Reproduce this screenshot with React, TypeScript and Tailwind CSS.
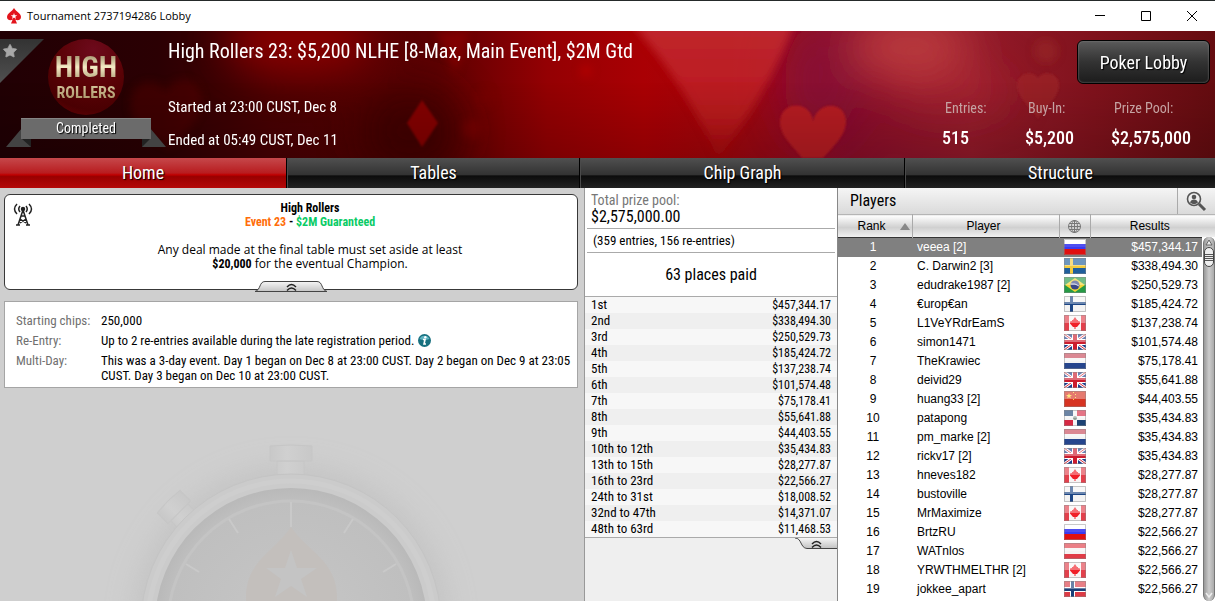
import { ReactNode } from 'react';
import { Star } from 'lucide-react';

const tabs = ['Home', 'Tables', 'Chip Graph', 'Structure'];

const stats = [
  { label: 'Entries:', value: '515' },
  { label: 'Buy-In:', value: '$5,200' },
  { label: 'Prize Pool:', value: '$2,575,000' },
];

const payouts = [
  ['1st', '$457,344.17'],
  ['2nd', '$338,494.30'],
  ['3rd', '$250,529.73'],
  ['4th', '$185,424.72'],
  ['5th', '$137,238.74'],
  ['6th', '$101,574.48'],
  ['7th', '$75,178.41'],
  ['8th', '$55,641.88'],
  ['9th', '$44,403.55'],
  ['10th to 12th', '$35,434.83'],
  ['13th to 15th', '$28,277.87'],
  ['16th to 23rd', '$22,566.27'],
  ['24th to 31st', '$18,008.52'],
  ['32nd to 47th', '$14,371.07'],
  ['48th to 63rd', '$11,468.53'],
];

const players = [
  { name: 'veeea [2]', country: 'ru', result: '$457,344.17' },
  { name: 'C. Darwin2 [3]', country: 'se', result: '$338,494.30' },
  { name: 'edudrake1987 [2]', country: 'br', result: '$250,529.73' },
  { name: '€urop€an', country: 'fi', result: '$185,424.72' },
  { name: 'L1VeYRdrEamS', country: 'ca', result: '$137,238.74' },
  { name: 'simon1471', country: 'gb', result: '$101,574.48' },
  { name: 'TheKrawiec', country: 'nl', result: '$75,178.41' },
  { name: 'deivid29', country: 'gb', result: '$55,641.88' },
  { name: 'huang33 [2]', country: 'cn', result: '$44,403.55' },
  { name: 'patapong', country: 'do', result: '$35,434.83' },
  { name: 'pm_marke [2]', country: 'nl', result: '$35,434.83' },
  { name: 'rickv17 [2]', country: 'gb', result: '$35,434.83' },
  { name: 'hneves182', country: 'ca', result: '$28,277.87' },
  { name: 'bustoville', country: 'fi', result: '$28,277.87' },
  { name: 'MrMaximize', country: 'ca', result: '$28,277.87' },
  { name: 'BrtzRU', country: 'ru', result: '$22,566.27' },
  { name: 'WATnlos', country: 'at', result: '$22,566.27' },
  { name: 'YRWTHMELTHR [2]', country: 'ca', result: '$22,566.27' },
  { name: 'jokkee_apart', country: 'no', result: '$22,566.27' },
];

const flagArt: Record<string, ReactNode> = {
  ru: (
    <>
      <path fill="#fff" d="M0 0h22v6H0z" />
      <path fill="#3a3af0" d="M0 5h22v6H0z" />
      <path fill="#e01010" d="M0 10h22v6H0z" />
    </>
  ),
  se: (
    <>
      <path fill="#1f5f9c" d="M0 0h22v16H0z" />
      <path fill="#f3cb3c" d="M6 0h3v16H6zM0 7h22v3H0z" />
    </>
  ),
  br: (
    <>
      <path fill="#259a45" d="M0 0h22v16H0z" />
      <path fill="#f2d435" d="M11 1l10 7-10 7L1 8z" />
      <circle cx="11" cy="8" r="4.500" fill="#3a4787" />
      <path stroke="#dde" fill="none" d="M7 7q4-1 8 2" />
    </>
  ),
  fi: (
    <>
      <path fill="#f3f3f3" d="M0 0h22v16H0z" />
      <path fill="#1c4585" d="M6 0h3v16H6zM0 6h22v3H0z" />
    </>
  ),
  ca: (
    <>
      <path fill="#f8f4f4" d="M0 0h22v16H0z" />
      <path fill="#e2404c" d="M0 0h5v16H0zM17 0h5v16h-5z" />
      <path fill="#f02028" d="M11 2l2 3h1v1l2 .5v2L13 12h-1.500v2h-1v-2H9L6 8.500v-2L8 6V5h1z" />
    </>
  ),
  gb: (
    <>
      <path fill="#1c3c8c" d="M0 0h22v16H0z" />
      <path stroke="#fff" strokeWidth="3" d="M0 0l22 16M22 0L0 16" />
      <path stroke="#d22a3a" d="M0 0l22 16M22 0L0 16" />
      <path fill="#fff" d="M8 0h6v16H8zM0 5h22v6H0z" />
      <path fill="#cc1c2e" d="M9 0h4v16H9zM0 6h22v4H0z" />
    </>
  ),
  nl: (
    <>
      <path fill="#c8495a" d="M0 0h22v6H0z" />
      <path fill="#f3f3f3" d="M0 5h22v6H0z" />
      <path fill="#26458d" d="M0 10h22v6H0z" />
    </>
  ),
  cn: (
    <>
      <path fill="#d73422" d="M0 0h22v16H0z" />
      <path fill="#ffd83a" d="M5 2l.8 2.100H8L6.200 5.400l.7 2.200L5 6.300 3.100 7.600l.7-2.200L2 4.100h2.200zM9 1h1v1H9zM11 3h1v1h-1zM11 6h1v1h-1zM9 8h1v1H9z" />
    </>
  ),
  do: (
    <>
      <path fill="#f5f5f5" d="M0 0h22v16H0z" />
      <path fill="#1d4374" d="M0 0h9v6H0zM13 10h9v6h-9z" />
      <path fill="#d62a44" d="M13 0h9v6h-9zM0 10h9v6H0z" />
      <circle cx="11" cy="8" r="2" fill="#8a9a92" />
    </>
  ),
  at: (
    <>
      <path fill="#e03b46" d="M0 0h22v16H0z" />
      <path fill="#f5f2f2" d="M0 5h22v6H0z" />
    </>
  ),
  no: (
    <>
      <path fill="#dc3b46" d="M0 0h22v16H0z" />
      <path fill="#fff" d="M6 0h5v16H6zM0 6h22v5H0z" />
      <path fill="#1c4078" d="M7 0h3v16H7zM0 7h22v3H0z" />
    </>
  ),
};

function Flag({ country }: { country: string }) {
  return (
    <svg width="22" height="16" viewBox="0 0 22 16" role="img" aria-label={country} className="mx-auto block">
      {flagArt[country]}
      <path fill="#fff" fillOpacity={country === 'ru' ? 0.1 : 0.35} d="M0 0h22v8H0z" />
      <path fill="none" stroke="#888" strokeOpacity=".45" d="M.5.5h21v15H.5z" />
    </svg>
  );
}

function HeaderArt() {
  return (
    <svg viewBox="0 0 1215 127" preserveAspectRatio="none" className="absolute inset-0 h-full w-full" aria-hidden="true">
      <defs>
        <linearGradient id="base">
          <stop offset="0" stopColor="#210004" />
          <stop offset=".13" stopColor="#2b0003" />
          <stop offset=".22" stopColor="#480003" />
          <stop offset=".36" stopColor="#5c0002" />
          <stop offset=".45" stopColor="#940003" />
          <stop offset=".53" stopColor="#aa0004" />
          <stop offset=".6" stopColor="#a2060c" />
          <stop offset=".66" stopColor="#960c22" />
          <stop offset=".7" stopColor="#8d0e2b" />
          <stop offset=".8" stopColor="#951b2b" />
          <stop offset=".9" stopColor="#80121c" />
          <stop offset="1" stopColor="#650c10" />
        </linearGradient>
        <linearGradient id="lobe" x2="0" y2="1">
          <stop offset="0" stopColor="#c42c34" />
          <stop offset=".7" stopColor="#be1c20" />
          <stop offset="1" stopColor="#b01012" stopOpacity=".5" />
        </linearGradient>
        <linearGradient id="shade" x2="0" y2="1">
          <stop offset=".4" stopColor="#000" stopOpacity="0" />
          <stop offset="1" stopColor="#000" stopOpacity=".16" />
        </linearGradient>
        <filter id="soft" x="-50%" y="-50%" width="200%" height="200%">
          <feGaussianBlur stdDeviation="20" />
        </filter>
        <filter id="edge" x="-50%" y="-50%" width="200%" height="200%">
          <feGaussianBlur stdDeviation="4" />
        </filter>
        <filter id="crisp" x="-20%" y="-20%" width="140%" height="140%">
          <feGaussianBlur stdDeviation="1" />
        </filter>
      </defs>
      <path fill="url(#base)" d="M0 0h1215v127H0z" />
      <g filter="url(#soft)">
        <ellipse cx="300" cy="10" rx="75" ry="35" fill="#8e0004" opacity=".9" />
        <ellipse cx="410" cy="100" rx="50" ry="45" fill="#3c0000" opacity=".8" />
        <ellipse cx="910" cy="15" rx="60" ry="34" fill="#c24242" opacity=".8" />
        <ellipse cx="950" cy="60" rx="60" ry="24" fill="#ab2630" opacity=".6" />
        <ellipse cx="820" cy="50" rx="36" ry="60" fill="#86093a" opacity=".8" />
      </g>
      <g filter="url(#edge)">
        <path fill="url(#lobe)" opacity=".85" d="M632-8h162q-18 56-76 136Q690 60 632-8z" />
        <path fill="#6c0003" opacity=".3" d="M130 75q0-24 20-24 12 0 16 10 4-12 18-12 18 0 18 22 0 18-32 46-40-22-40-42z" />
        <path fill="#9c0006" opacity=".5" d="M435 0h34l-13 42z" />
        <circle cx="485" cy="67" r="8" fill="#7c0004" opacity=".4" />
        <circle cx="472" cy="98" r="10" fill="#8a0004" opacity=".4" />
        <circle cx="586" cy="40" r="6" fill="#b80008" opacity=".7" />
        <circle cx="1046" cy="20" r="12" fill="#a23124" opacity=".35" />
      </g>
      <g filter="url(#crisp)">
        <path fill="#840003" d="M422 69l16 23-16 24-15-24z" />
        <path fill="#b71d22" d="M813 91c-1-22-33-22-33 0 0 14 13 24 22 36h21c13-14 23-24 23-36 0-21-29-22-33 0z" />
        <path fill="#a32a2a" opacity=".55" d="M1038 48c-2-9-21-8-21 6 0 13 14 22 21 34 7-12 21-21 21-34 0-14-19-15-21-6z" />
      </g>
      <path fill="url(#shade)" d="M0 0h1215v127H0z" />
    </svg>
  );
}

function EventLogo() {
  return (
    <div className="relative flex h-19 w-19 flex-col items-center justify-center overflow-hidden rounded-full bg-[radial-gradient(circle_at_60%_15%,#6d0a1c,#5a0206_45%,#4a0002_75%,#6e0307)]">
      <span className="bg-linear-to-b from-[#8d7b55] via-[#f5ebc6] to-[#a4916a] bg-clip-text font-['Roboto_Condensed',sans-serif] text-[30px] leading-8 font-bold text-transparent">
        HIGH
      </span>
      <span className="bg-linear-to-b from-[#d9caa0] to-[#a08c60] bg-clip-text font-['Roboto_Condensed',sans-serif] text-[16px] leading-5 font-bold text-transparent">
        ROLLERS
      </span>
    </div>
  );
}

function Stopwatch() {
  return (
    <svg viewBox="0 388 584 213" preserveAspectRatio="xMidYMin slice" className="h-full w-full" aria-hidden="true">
      <defs>
        <filter id="glow" x="-30%" y="-30%" width="160%" height="160%">
          <feGaussianBlur stdDeviation="14" />
        </filter>
        <radialGradient id="face">
          <stop offset=".3" stopColor="#c4c4c4" />
          <stop offset=".9" stopColor="#bfbfbf" />
          <stop offset="1" stopColor="#b9b9b9" />
        </radialGradient>
        <linearGradient id="knob">
          <stop offset="0" stopColor="#c8c8c8" />
          <stop offset=".4" stopColor="#d0d0d0" />
          <stop offset="1" stopColor="#c8c8c8" />
        </linearGradient>
      </defs>
      <circle cx="291" cy="624" r="158" fill="#bfbfbf" opacity=".7" filter="url(#glow)" />
      <path fill="url(#knob)" stroke="#c6c6c6" d="M277 461h27v14h-27zM270 446q21-2 42 0v15h-42z" />
      <g transform="rotate(-45 291 624)">
        <path fill="url(#knob)" stroke="#c6c6c6" d="M279 466h24v10h-24zM275 451q16-2 32 0v15h-32z" />
      </g>
      <circle cx="291" cy="624" r="150" fill="#cbcbcb" stroke="#c4c4c4" />
      <circle cx="291" cy="624" r="143" fill="none" stroke="#cecece" strokeWidth="5" />
      <circle cx="291" cy="624" r="136" fill="url(#face)" />
      <circle cx="291" cy="624" r="123" fill="none" stroke="#c4c4c4" strokeWidth="3" />
      <path stroke="#c9c9c9" strokeWidth="2" d="M291 502v25M229 519l9 14M353 519l-9 14M186 564l13 8M396 564l-13 8" />
      <path fill="#c3bfbc" d="M291 527c16 24 46 34 46 70v10h-91v-10c0-36 29-46 45-70z" />
      <path fill="#c4c4c4" d="M291 550l6 18h20l-16 11 6 18-16-11-16 11 6-18-15-11h19z" />
    </svg>
  );
}

function DoubleChevron() {
  return (
    <svg width="11" height="8" viewBox="0 0 11 8" fill="none" stroke="#222" strokeWidth="1.400">
      <path d="M1 4q4.500-5 9 0M1 7.500q4.500-5 9 0" />
    </svg>
  );
}

export default function App() {
  return (
    <div className="flex h-screen flex-col overflow-hidden bg-white font-['Roboto_Condensed',sans-serif] text-black">
      <div className="h-px shrink-0 bg-[#252a2a]" />
      <div className="flex h-[30px] shrink-0 items-center bg-white pl-[7px]">
        <svg width="14" height="16" viewBox="0 0 14 16">
          <path fill="#e3141c" d="M7 0c2 3.500 7 5.500 7 9 0 3.300-3.700 4-5.700 2.600L10 15.500H4l1.700-3.900C3.700 13 0 12.300 0 9c0-3.500 5-5.500 7-9z" />
          <path fill="#fff" d="M7 5l.8 2.300h2.400L8.300 8.700l.7 2.200-2-1.300-2 1.300.7-2.200-1.900-1.400h2.400z" />
        </svg>
        <h1 className="ml-1.5 flex-1 font-['Open_Sans',sans-serif] text-[11px]">Tournament 2737194286 Lobby</h1>
        <button aria-label="Minimize" className="flex h-full w-[46px] items-center justify-center">
          <svg width="10" height="10" viewBox="0 0 10 10" stroke="#000"><path d="M0 4.500h10" /></svg>
        </button>
        <button aria-label="Maximize" className="flex h-full w-[46px] items-center justify-center">
          <svg width="10" height="10" viewBox="0 0 10 10" stroke="#000" fill="none"><path d="M.5.5h9v9h-9z" /></svg>
        </button>
        <button aria-label="Close" className="flex h-full w-[46px] items-center justify-center">
          <svg width="10" height="10" viewBox="0 0 10 10" stroke="#000"><path d="M0 0l10 10M10 0L0 10" /></svg>
        </button>
      </div>

      <header className="relative flex h-[127px] shrink-0 text-white">
        <HeaderArt />
        <div className="relative flex w-[168px] shrink-0 flex-col items-center pt-2 pl-1">
          <button aria-label="Add to favourites" className="absolute top-2 left-0 h-11 w-11 bg-linear-to-b from-[#333] to-[#505050] [clip-path:polygon(0_0,100%_0,0_100%)]">
            <Star className="absolute top-1 left-0.5 h-4 w-4 fill-[#a8a8a8] text-[#a8a8a8]" strokeWidth={1} />
          </button>
          <EventLogo />
          <div className="relative mt-[3px] flex h-[30px] w-40 justify-center">
            <svg viewBox="0 0 160 30" className="absolute inset-0 h-full w-full" aria-hidden="true">
              <path fill="#434343" d="M16 10L0 29h25V18zM144 10l16 19h-24V18z" />
              <path fill="#222" d="M16 21h9v8zM144 21h-8v8z" />
              <path fill="#6b6b6b" d="M15 0h130v21H15z" />
              <path stroke="#858585" d="M15 .5h130" />
            </svg>
            <span className="relative text-[14px] leading-5 [text-shadow:1px_1px_1px_#000]">Completed</span>
          </div>
        </div>
        <div className="relative flex min-w-0 flex-1 flex-col">
          <h2 className="mt-2 text-[20px] leading-6">High Rollers 23: $5,200 NLHE [8-Max, Main Event], $2M Gtd</h2>
          <p className="mt-[34px] text-[15px] leading-5">Started at 23:00 CUST, Dec 8</p>
          <p className="mt-[13px] text-[15px] leading-5">Ended at 05:49 CUST, Dec 11</p>
        </div>
        <div className="relative flex flex-col items-end pt-[9px]">
          <button className="mr-[5px] h-[44px] w-[133px] rounded-md border border-black bg-linear-to-b from-[#5a5a5a] via-[#333] via-50% to-[#1c1c1c] text-[18px] shadow-[inset_0_0_2px_#888] [text-shadow:1px_1px_1px_#000]">
            Poker Lobby
          </button>
          <dl className="mt-3.5 grid grid-cols-[83px_86px_104px]">
            {stats.map((s) => (
              <div key={s.label}>
                <dt className="pl-[3px] text-[14px] leading-5 text-[#c5a3a3]">{s.label}</dt>
                <dd className="mt-2 text-[18px] leading-6 font-medium">{s.value}</dd>
              </div>
            ))}
          </dl>
        </div>
      </header>

      <nav className="grid h-[30px] shrink-0 grid-cols-[287fr_293fr_325fr_310fr]">
        {tabs.map((tab, i) => (
          <button
            key={tab}
            className={`border-r border-black text-[18px] leading-7 text-white [text-shadow:1px_1px_1px_#000] last:border-r-0 ${
              i === 0
                ? 'bg-[linear-gradient(#c6484b,#b81c1f_50%,#c00000_56%,#990000_62%,#b40808)]'
                : 'border-l border-l-[#4a4a4a] bg-[linear-gradient(#505050,#333_55%,#0c0c0c_60%,#222)]'
            }`}
          >
            {tab}
          </button>
        ))}
      </nav>

      <main className="grid min-h-0 flex-1 grid-cols-[584fr_253fr_378fr]">
        <section className="flex min-h-0 flex-col bg-[#cfcfcf]">
          <div className="relative mt-1.5 mr-1.5 ml-1 h-24 shrink-0 rounded-md border border-[#383838] bg-white pt-1.5 pl-[38px] text-center font-['Open_Sans',sans-serif] text-[12px] leading-[14px]">
            <svg width="20" height="23" viewBox="0 0 20 23" className="absolute top-2 left-2" fill="none" stroke="#222" strokeWidth="1.500">
              <path d="M4 1Q-1 6 4 11M7 3Q4.500 6 7 9M16 1q5 5 0 10M13 3q2.500 3 0 6" />
              <circle cx="10" cy="6" r="1.500" fill="#222" />
              <path d="M10 7L5 22M10 7l5 15M8 13h4M7 16l6 4M13 16l-6 4M3 22h4M13 22h4" />
            </svg>
            <p className="font-['Roboto_Condensed',sans-serif] font-bold">High Rollers</p>
            <p className="font-['Roboto_Condensed',sans-serif] font-bold">
              <span className="text-[#ff6d0a]">Event 23</span> - <span className="text-[#0acb66]">$2M Guaranteed</span>
            </p>
            <p className="mt-3.5">Any deal made at the final table must set aside at least</p>
            <p>
              <b className="font-['Roboto_Condensed',sans-serif]">$20,000</b> for the eventual Champion.
            </p>
            <button aria-label="Collapse notice" className="absolute bottom-[-3px] left-1/2 flex h-[11px] w-[72px] -translate-x-1/2 items-center justify-center">
              <svg viewBox="0 0 72 11" className="absolute inset-0 h-full w-full">
                <defs>
                  <linearGradient id="grip" x2="0" y2="1">
                    <stop offset="0" stopColor="#f6f6f6" />
                    <stop offset="1" stopColor="#c4c4c4" />
                  </linearGradient>
                </defs>
                <path fill="url(#grip)" stroke="#444" d="M0 10.500C6 9 4 .5 10 .5h52c6 0 4 8.500 10 10z" />
              </svg>
              <span className="relative"><DoubleChevron /></span>
            </button>
          </div>

          <dl className="mt-[11px] mr-1.5 ml-1 grid shrink-0 grid-cols-[85px_1fr] gap-y-[5px] border border-[#a5a5a5] bg-white pt-[11px] pr-0.5 pb-1 pl-[11px] text-[13px] leading-[15px]">
            <dt className="text-[#707070]">Starting chips:</dt>
            <dd>250,000</dd>
            <dt className="text-[#707070]">Re-Entry:</dt>
            <dd className="flex items-center gap-1">
              Up to 2 re-entries available during the late registration period.
              <svg width="13" height="13" viewBox="0 0 13 13" aria-label="Info">
                <circle cx="6.500" cy="6.500" r="6.500" fill="#17707f" />
                <path fill="#62b4c2" d="M1.500 5a5.300 5 0 0 1 10 0q-5 2-10 0z" />
                <circle cx="7.300" cy="3.200" r="1.200" fill="#fff" />
                <path fill="none" stroke="#fff" strokeWidth="1.600" d="M5 5.500h2L6 10h2" />
              </svg>
            </dd>
            <dt className="text-[#707070]">Multi-Day:</dt>
            <dd>This was a 3-day event. Day 1 began on Dec 8 at 23:00 CUST. Day 2 began on Dec 9 at 23:05 CUST. Day 3 began on Dec 10 at 23:00 CUST.</dd>
          </dl>
          <div className="min-h-0 flex-1 overflow-hidden">
            <Stopwatch />
          </div>
        </section>

        <section className="flex min-h-0 flex-col border-l border-[#999] bg-[#efefef]">
          <div className="bg-white px-0.5">
            <div className="border-b border-[#aaa] px-1 pt-1 pb-0.5">
              <p className="text-[14px] leading-4 text-[#777]">Total prize pool:</p>
              <p className="text-[16px] leading-[18px]">$2,575,000.00</p>
            </div>
            <p className="border-b border-[#aaa] px-1.5 text-[13px] leading-[23px]">(359 entries, 156 re-entries)</p>
            <p className="text-center text-[16px] leading-[43px]">63 places paid</p>
          </div>
          <table className="w-full border-y border-[#aaa] text-[12px] leading-4">
            <tbody>
              {payouts.map(([place, prize]) => (
                <tr key={place} className="h-4 odd:bg-[#f7f7f7] even:bg-[#efefef]">
                  <td className="pl-1.5 text-[13px]">{place}</td>
                  <td className="pr-1.5 text-right">{prize}</td>
                </tr>
              ))}
            </tbody>
          </table>
          <button aria-label="Collapse payouts" className="relative flex h-[11px] w-[42px] items-center justify-center self-end">
            <svg viewBox="0 0 42 11" className="absolute inset-0 h-full w-full">
              <path fill="url(#grip)" d="M0 0h42v10H12C5 10 7 0 0 0z" />
              <path fill="none" stroke="#444" d="M42 10.500H12C5 10 7 0 0 0" />
            </svg>
            <span className="relative"><DoubleChevron /></span>
          </button>
        </section>

        <section className="flex min-h-0 flex-col overflow-hidden border-l border-[#888] bg-white">
          <div className="flex h-[26px] shrink-0 items-center bg-linear-to-b from-[#f5f5f5] to-[#dadada]">
            <h2 className="flex-1 pl-3 text-[16px]">Players</h2>
            <button aria-label="Find player" className="flex h-full w-[38px] items-center justify-center border-l border-[#aaa]">
              <svg width="21" height="21" viewBox="0 0 21 21">
                <circle cx="8" cy="8" r="6.500" fill="#eee" stroke="#555" strokeWidth="1.600" />
                <circle cx="8" cy="6" r="2.300" fill="#555" />
                <path fill="#555" d="M4 11.500q1-3 4-3t4 3Q8 15 4 11.500z" />
                <path stroke="#555" strokeWidth="3" d="M13 13l6 6" />
              </svg>
            </button>
          </div>
          <div className="relative min-h-0 flex-1 overflow-hidden font-['Liberation_Sans',sans-serif] text-[12px]">
            <table className="w-full table-fixed border-collapse">
              <colgroup>
                <col className="w-[74px]" />
                <col />
                <col className="w-[31px]" />
                <col className="w-[125px]" />
              </colgroup>
              <thead>
                <tr className="h-[23px] border-t border-b border-t-[#b5b5b5] border-b-[#333] bg-[linear-gradient(#fdfdfd,#d0d0d0_55%,#f0f0f0)]">
                  <th className="border-r border-[#aaa] font-normal">
                    <span className="flex items-center justify-end gap-3.5 pr-0.5">
                      Rank
                      <svg width="10" height="7" viewBox="0 0 10 7"><path fill="#888" d="M5 0l5 7H0z" /></svg>
                    </span>
                  </th>
                  <th className="border-r border-[#aaa] pr-1 font-normal">Player</th>
                  <th className="border-r border-[#aaa]" aria-label="Country">
                    <svg width="13" height="13" viewBox="0 0 13 13" className="mx-auto" fill="none" stroke="#777">
                      <circle cx="6.500" cy="6.500" r="6" />
                      <ellipse cx="6.500" cy="6.500" rx="3" ry="6" />
                      <path d="M6.500 0v13M0 6.500h13M1.500 3.500h10M1.500 9.500h10" />
                    </svg>
                  </th>
                  <th className="pr-1.5 font-normal">Results</th>
                </tr>
              </thead>
              <tbody>
                {players.map((p, i) => (
                  <tr key={p.name} className={`h-[19px] ${i === 0 ? 'bg-[#808080] text-white' : ''}`}>
                    <td className="pr-1 text-center">{i + 1}</td>
                    <td className="pl-[5px]">{p.name}</td>
                    <td><Flag country={p.country} /></td>
                    <td className="pr-[17px] text-right">{p.result}</td>
                  </tr>
                ))}
              </tbody>
            </table>
            <div className="absolute top-[23px] right-0 bottom-0 w-[13px] bg-white pl-px">
              <div className="relative h-full rounded-full border-x border-[#777] bg-linear-to-r from-[#999] via-[#ccc] to-[#aaa]">
                <svg width="10" height="12" viewBox="0 0 10 12" className="absolute top-0 left-0">
                  <path fill="#eee" stroke="#666" d="M5 3l3 5H2z" />
                </svg>
                <div className="absolute inset-x-0 top-2.5 flex h-5 flex-col items-center justify-center gap-px rounded-full border border-[#444] bg-[#eee]">
                  <i className="h-px w-2 bg-[#555]" />
                  <i className="h-px w-2 bg-[#555]" />
                  <i className="h-px w-2 bg-[#555]" />
                  <i className="h-px w-2 bg-[#555]" />
                </div>
                <svg width="10" height="10" viewBox="0 0 10 10" className="absolute bottom-0 left-0">
                  <path fill="none" stroke="#eee" strokeWidth="1.500" d="M2 2l3 4 3-4" />
                </svg>
              </div>
            </div>
          </div>
        </section>
      </main>
    </div>
  );
}
